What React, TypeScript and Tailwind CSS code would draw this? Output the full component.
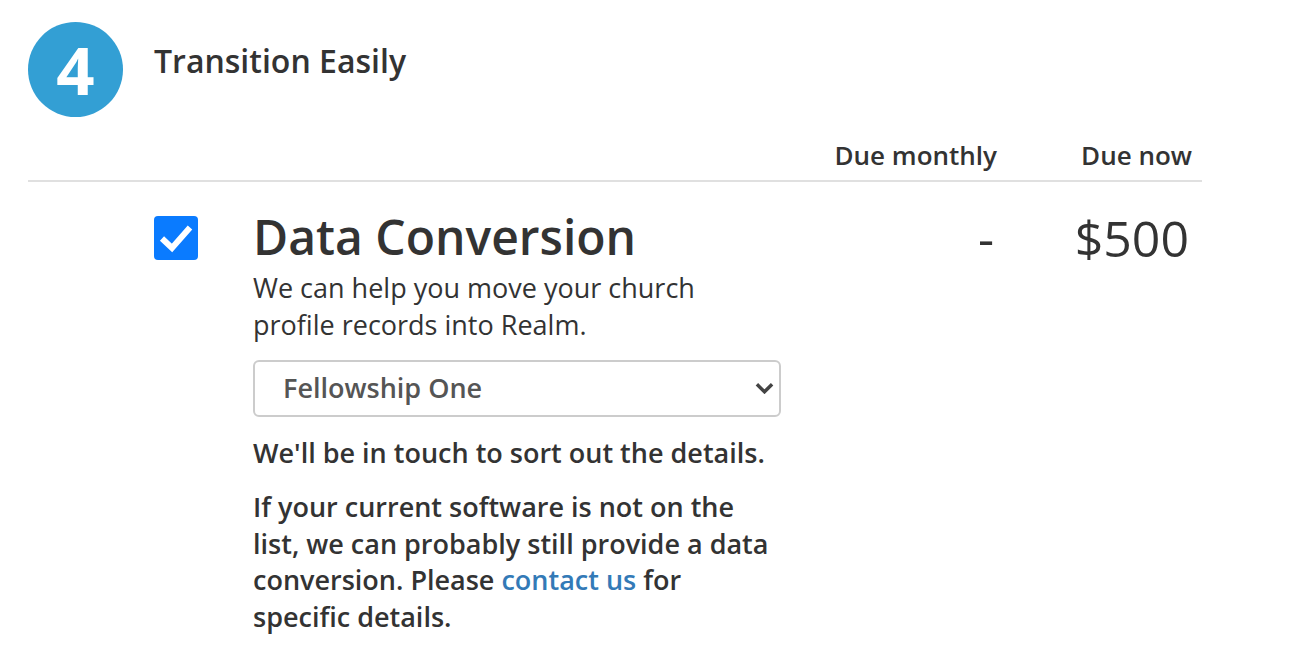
export default function App() {
  return (
    <div className="min-h-screen bg-white text-[#333]" style={{ fontFamily: "'Open Sans', 'Liberation Sans', sans-serif" }}>
      <div className="w-[1174px] ml-[28px] pt-[22px]">
        {/* Step header */}
        <div className="flex items-start gap-[31px]">
          <div className="w-[95px] h-[95px] rounded-full bg-[#339fd4] flex items-center justify-center text-white font-bold text-[67px] leading-none">
            4
          </div>
          <h2 className="text-[32px] font-semibold leading-none mt-[23px] text-[#333]">Transition Easily</h2>
        </div>

        {/* Column headings */}
        <div className="flex justify-end mt-[19px] pb-[6px] border-b-2 border-[#e0e0e0] text-[26px] font-semibold leading-[38px]">
          <div className="w-[200px] text-right pr-[9px]">Due monthly</div>
          <div className="w-[196px] text-right pr-[10px]">Due now</div>
        </div>

        {/* Item row */}
        <div className="flex mt-[31px]">
          <div className="ml-[126px] mt-[3px] w-[44px] h-[44px] rounded-[4px] bg-[#0a7bff] shrink-0">
            <svg viewBox="0 0 44 44" className="w-[44px] h-[44px]">
              <path d="M8 22.5L18 32L36 11.5" fill="none" stroke="white" strokeWidth="6" strokeLinecap="butt" strokeLinejoin="miter" />
            </svg>
          </div>
          <div className="w-[528px] ml-[55px]">
            <h3 className="text-[48px] font-semibold leading-[48px]">Data Conversion</h3>
            <p className="text-[27px] leading-[37px] mt-[8px] w-[460px]">
              We can help you move your church profile records into Realm.
            </p>
            <div className="relative mt-[17px]">
              <select defaultValue="f1" className="appearance-none block w-[528px] h-[57px] border-2 border-[#ccc] rounded-[6px] bg-white pl-[28px] text-[27px] font-semibold text-[#555] outline-none">
                <option value="f1">Fellowship One</option>
              </select>
              <svg viewBox="0 0 20 12" className="absolute right-[7px] top-[22px] w-[19px] h-[12px] pointer-events-none">
                <path d="M2 2l8 8 8-8" fill="none" stroke="#444" strokeWidth="3.6" />
              </svg>
            </div>
            <p className="text-[27px] font-semibold leading-[37px] mt-[17px]">We'll be in touch to sort out the details.</p>
            <p className="text-[27px] font-semibold leading-[36.5px] mt-[18px] w-[528px]">
              If your current software is not on the list, we can probably still provide a data conversion. Please{" "}
              <a href="#" className="text-[#337ab7]">contact us</a> for specific details.
            </p>
          </div>
          <div className="flex-1 flex justify-end text-[50px] leading-[50px]">
            <div className="w-[200px] text-right pr-[12px]">-</div>
            <div className="w-[196px] text-right pr-[13px]">$500</div>
          </div>
        </div>
      </div>
    </div>
  );
}
